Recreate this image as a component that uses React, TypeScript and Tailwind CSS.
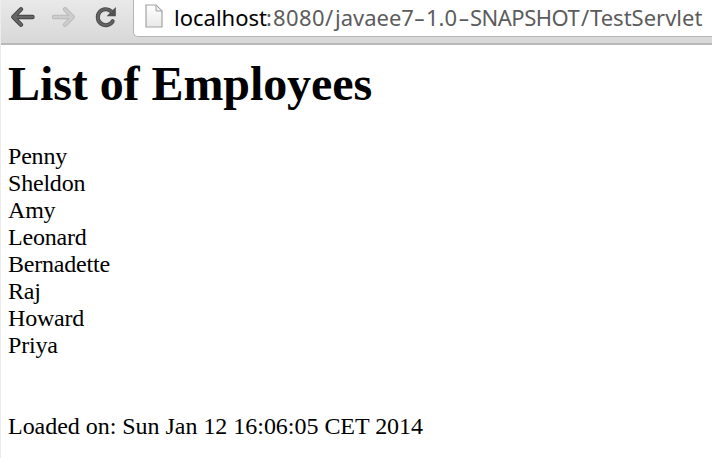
const employees = ["Penny", "Sheldon", "Amy", "Leonard", "Bernadette", "Raj", "Howard", "Priya"];

function ArrowIcon({ forward = false }: { forward?: boolean }) {
  const edge = forward ? "#b8b8b8" : "#444444";
  const fill = forward ? "#cdcdcd" : "#666666";
  const d = forward ? "M3 11H21.5M14 3.3l7.7 7.7-7.7 7.7" : "M22.5 11H3.5M11 3.3L3.3 11l7.7 7.7";
  return (
    <svg width="25" height="22" viewBox="0 0 25 22" fill="none" strokeLinecap="round" strokeLinejoin="round" className="block shrink-0">
      <path d={d} stroke={edge} strokeWidth="4.4" />
      <path d={d} stroke={fill} strokeWidth="2.5" />
    </svg>
  );
}

function ReloadIcon() {
  return (
    <svg width="24" height="24" viewBox="0 0 24 24" fill="none" className="block shrink-0">
      <path d="M18.7 16.2A8 8 0 1 1 17.4 6.5" stroke="#484848" strokeWidth="4" strokeLinecap="round" />
      <path d="M21.8 2V11.2H12.6Z" fill="#505050" />
      <path d="M18.7 16.2A8 8 0 1 1 17.4 6.5" stroke="#626262" strokeWidth="2.3" strokeLinecap="round" />
    </svg>
  );
}

function PageIcon() {
  return (
    <svg width="18" height="24" viewBox="0 0 18 24" fill="none" className="block shrink-0">
      <defs>
        <linearGradient id="paper" x1="0" y1="0" x2="0" y2="1">
          <stop stopColor="#fff" />
          <stop offset="1" stopColor="#e9e9e9" />
        </linearGradient>
      </defs>
      <path d="M1 1H11L17 7V23H1Z" fill="url(#paper)" stroke="#a2a2a2" strokeWidth="1.2" />
      <path d="M11 1V7H17Z" fill="#eee" stroke="#a2a2a2" />
    </svg>
  );
}

export default function App() {
  return (
    <div className="flex h-[458px] w-[712px] flex-col overflow-hidden border-l border-[#ececec] bg-white">
      <header className="flex h-[45px] shrink-0 items-start border-b-2 border-[#b9b9b9] bg-linear-to-b from-[#e9e9e9] to-[#d8d8d8]">
        <div className="flex w-[132px] shrink-0 items-start pt-[6px] pl-[9px]">
          <ArrowIcon />
          <div className="ml-[16px]"><ArrowIcon forward /></div>
          <div className="-mt-px ml-[18px]"><ReloadIcon /></div>
        </div>
        <div className="flex h-[37px] grow items-start rounded-bl-[5px] border-b border-l border-[#b5b5b5] bg-white pt-[4px] pl-[11px]">
          <PageIcon />
          <div className="ml-[11px] flex font-['Noto_Sans','Open_Sans',sans-serif] text-[22px] leading-[26px] whitespace-nowrap text-[#5c5c5c]">
            <span className="w-[92px] text-black">localhost</span>
            <span className="w-[7px]">:</span>
            <span className="w-[52px] tracking-[0.4px]">8080</span>
            <span className="w-[10px]">/</span>
            <span className="w-[78px]">javaee7</span>
            <span className="w-[13px] scale-x-160 text-center">-</span>
            <span className="w-[32px]">1.0</span>
            <span className="w-[12px] scale-x-160 text-center">-</span>
            <span className="w-[111px] tracking-[-0.5px]">SNAPSHOT</span>
            <span className="w-[9px]">/</span>
            <span>TestServlet</span>
          </div>
        </div>
      </header>
      <main className="pt-[12px] pl-[7px] font-['Liberation_Serif','Times_New_Roman',serif] text-[24px] leading-[27px] text-black">
        <h1 className="text-[48px] leading-[54px] font-bold tracking-[-0.07px]">List of Employees</h1>
        <ul className="mt-[32px] tracking-[-0.2px]">
          {employees.map((name) => <li key={name}>{name}</li>)}
        </ul>
        <p className="mt-[54px] tracking-[-0.03px]">Loaded on: Sun Jan 12 16:06:05 CET 2014</p>
      </main>
    </div>
  );
}
